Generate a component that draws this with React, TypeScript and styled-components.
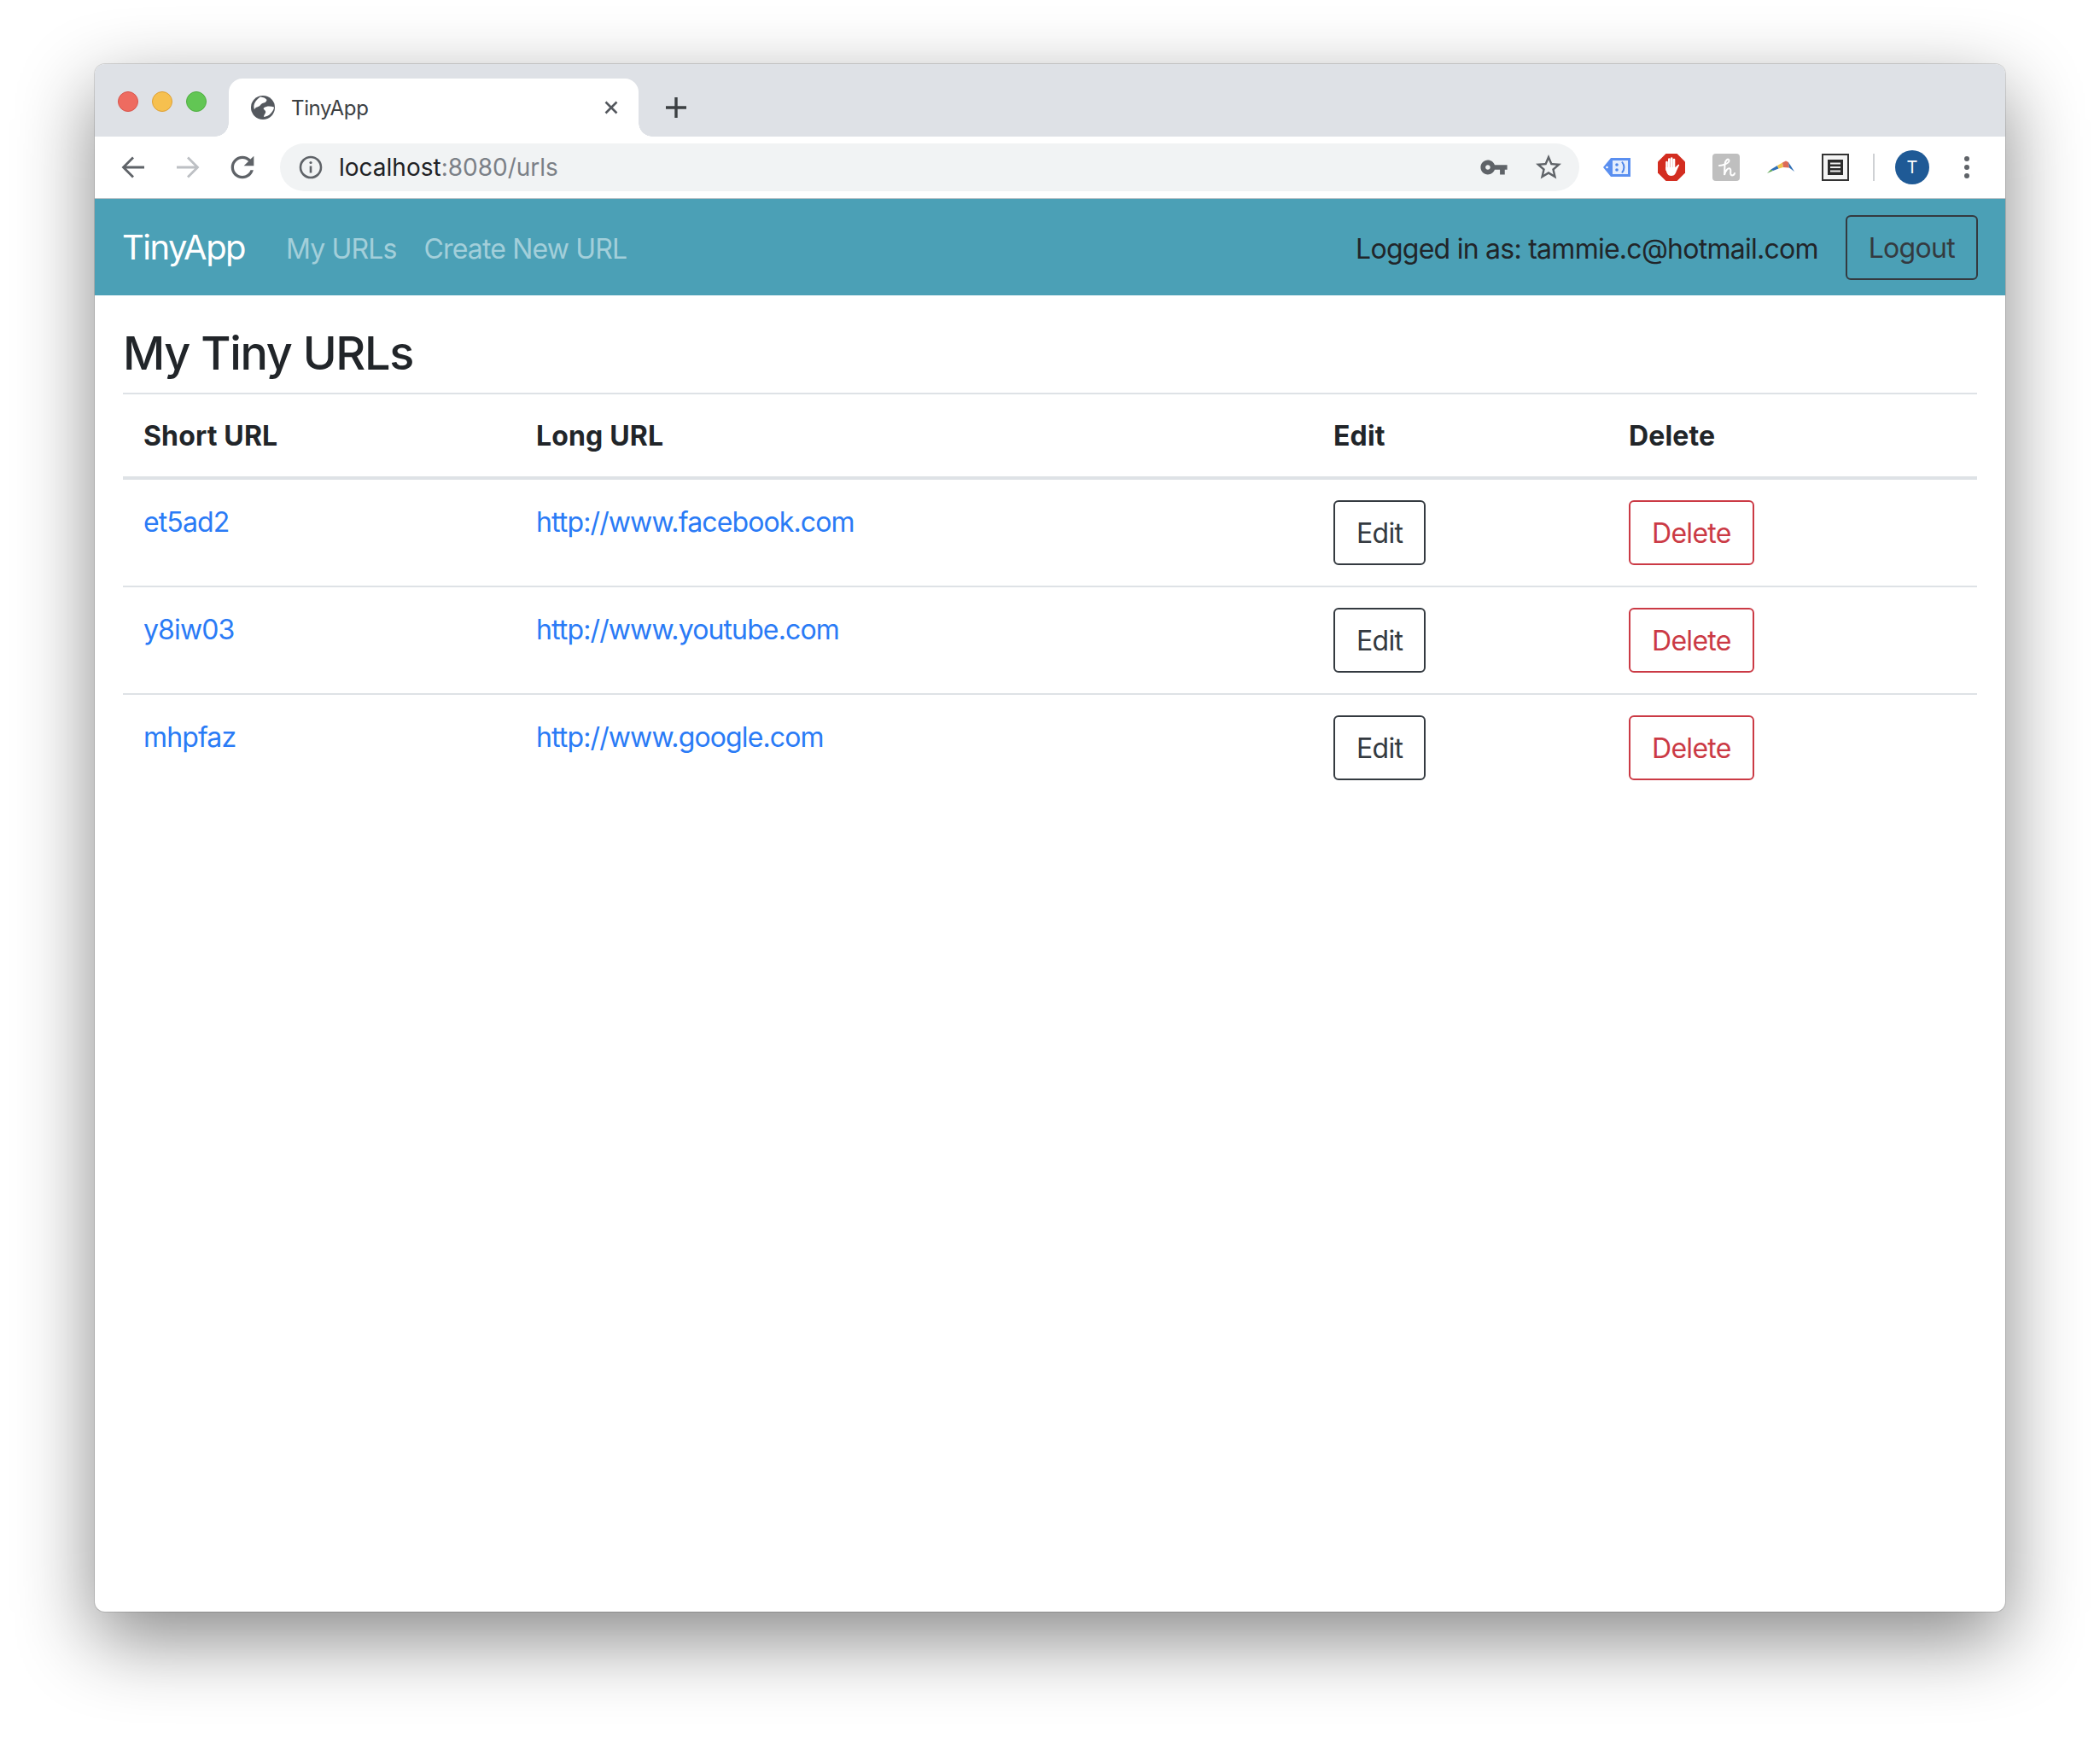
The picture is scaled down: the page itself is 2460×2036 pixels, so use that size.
import React from 'react'
import styled, { createGlobalStyle } from 'styled-components'

const GlobalStyle = createGlobalStyle`
  html, body { margin: 0; padding: 0; background: #fff; }
  body { font-family: Inter, "Liberation Sans", sans-serif; color: #212529; }
  * { box-sizing: border-box; }
`

const Stage = styled.div`
  width: 2460px;
  height: 2036px;
  padding: 75px 111px 148px;
  overflow: hidden;
`

const Window = styled.div`
  height: 1813px;
  border-radius: 12px;
  overflow: hidden;
  background: #fff;
  box-shadow: 0 0 0 1px rgba(0, 0, 0, 0.13), 0 32px 90px rgba(0, 0, 0, 0.47);
`

const TabStrip = styled.div`
  height: 85px;
  background: #dee1e6;
  display: flex;
  align-items: flex-start;
  padding-left: 27px;
`

const Lights = styled.div`
  display: flex;
  gap: 16px;
  margin-top: 32px;
`

const Light = styled.span<{ $fill: string; $edge: string }>`
  width: 24px;
  height: 24px;
  border-radius: 50%;
  background: ${p => p.$fill};
  border: 1px solid ${p => p.$edge};
`

const Tab = styled.div`
  position: relative;
  width: 480px;
  height: 68px;
  margin: 17px 0 0 26px;
  padding: 0 24px 0 26px;
  background: #fff;
  border-radius: 16px 16px 0 0;
  display: flex;
  align-items: center;
  gap: 19px;

  &::before, &::after {
    content: '';
    position: absolute;
    bottom: 0;
    width: 16px;
    height: 16px;
  }
  &::before {
    left: -16px;
    background: radial-gradient(circle at 0 0, #dee1e6 15.5px, #fff 16px);
  }
  &::after {
    right: -16px;
    background: radial-gradient(circle at 100% 0, #dee1e6 15.5px, #fff 16px);
  }
`

const TabTitle = styled.span`
  flex: 1;
  font-size: 24px;
  letter-spacing: -0.35px;
  color: #3c4043;
`

const NewTab = styled.div`
  width: 32px;
  height: 32px;
  margin: 35px 0 0 28px;
  display: flex;
  align-items: center;
  justify-content: center;
`

const Toolbar = styled.div`
  height: 73px;
  padding-left: 13px;
  background: #fff;
  display: flex;
  align-items: center;
  border-bottom: 1px solid #b9c3c9;
`

const IconSlot = styled.div`
  width: 64px;
  height: 56px;
  flex-shrink: 0;
  display: flex;
  align-items: center;
  justify-content: center;
`

const Omnibox = styled.div`
  width: 1522px;
  height: 56px;
  margin: 0 12px;
  padding: 0 4px 0 22px;
  border-radius: 28px;
  background: #f1f3f4;
  display: flex;
  align-items: center;
`

const Address = styled.div`
  flex: 1;
  margin-left: 19px;
  font-size: 28px;
  color: #7b8087;

  b { font-weight: 400; color: #202124; }
`

const Separator = styled.div`
  width: 2px;
  height: 32px;
  margin: 0 12px;
  background: #cfd1d4;
`

const Avatar = styled.div`
  width: 40px;
  height: 40px;
  border-radius: 50%;
  background: #1f5a96;
  color: #fff;
  font-size: 20px;
  display: flex;
  align-items: center;
  justify-content: center;
`

const Navbar = styled.nav`
  height: 113px;
  padding: 0 32px;
  background: #4ba0b6;
  display: flex;
  align-items: center;
`

const Brand = styled.a`
  font-size: 40px;
  letter-spacing: -1.55px;
  color: #fff;
  margin-right: 48px;
`

const NavLink = styled.a`
  padding-top: 3px;
  font-size: 32px;
  letter-spacing: -0.85px;
  color: #a3cfda;
  margin-right: 32px;
`

const LoggedIn = styled.span`
  margin-left: auto;
  padding-top: 3px;
  font-size: 32px;
  letter-spacing: -0.74px;
  color: #212529;
`

const OutlineButton = styled.button<{ $color: string }>`
  height: 76px;
  padding: 2px 25px 0;
  border: 2px solid ${p => p.$color};
  border-radius: 6px;
  background: transparent;
  color: ${p => p.$color};
  font-family: inherit;
  font-size: 32px;
  letter-spacing: -0.7px;
  line-height: 48px;
`

const LogoutButton = styled(OutlineButton)`
  margin-left: 32px;
`

const Main = styled.main`
  padding: 34px 32px 0 33px;
`

const Heading = styled.h3`
  margin: 0 0 12px;
  font-size: 54px;
  font-weight: 500;
  letter-spacing: -1.3px;
  line-height: 68px;
  color: #212529;
`

const Table = styled.table`
  width: 2172px;
  border-collapse: separate;
  border-spacing: 0;
  table-layout: fixed;
  font-size: 32px;
  line-height: 48px;
`

const HeadCell = styled.th<{ $width: number }>`
  width: ${p => p.$width}px;
  padding: 25px 24px 23px;
  text-align: left;
  font-weight: 700;
  letter-spacing: 0.15px;
  color: #212529;
  border-top: 2px solid #dee2e6;
  border-bottom: 4px solid #dee2e6;
`

const Cell = styled.td`
  padding: 24px;
  vertical-align: top;

  tr + tr & { border-top: 2px solid #dee2e6; }
`

const TableLink = styled.a`
  display: inline-block;
  padding-top: 2px;
  color: #2a7bf6;
  letter-spacing: -0.88px;
  text-decoration: none;
`

const GlobeIcon = () => (
  <svg width="28" height="28" viewBox="0 0 28 28">
    <circle cx="14" cy="14" r="14" fill="#54585e" />
    <path d="M11 1.500c3 .3 6.500 1.500 7.500 3.500-.5 3-3 3.500-5 4-2 1-2.500 2.500-4 3.500-2 1-4.500 1-5.500 4-1-3-1-6 1-9 1.500-2.500 3.500-4.500 6-6z" fill="#fff" />
    <path d="M27 13.500c-3-.8-6-1.500-9-.5-2 .7-4 1.500-3 3 1.500 1.200 2.800 2.500 2 4-.5 1.500-2 3-2 5 3-.3 6-1.500 8.500-4.500 2-2.500 3.500-4.500 3.500-7z" fill="#fff" />
  </svg>
)

const CloseIcon = () => (
  <svg width="16" height="16" viewBox="0 0 16 16" stroke="#54585e" strokeWidth="2.6">
    <path d="M1.5 1.5l13 13M14.5 1.5l-13 13" />
  </svg>
)

const PlusIcon = () => (
  <svg width="24" height="24" viewBox="0 0 24 24" stroke="#3c4043" strokeWidth="3.4">
    <path d="M12 0v24M0 12h24" />
  </svg>
)

const ArrowIcon = ({ color, flip }: { color: string; flip?: boolean }) => (
  <svg width="28" height="26" viewBox="0 0 28 26" fill="none" stroke={color} strokeWidth="2.8" style={flip ? { transform: 'scaleX(-1)' } : undefined}>
    <path d="M27 13H3M14 1.5L2.5 13 14 24.5" />
  </svg>
)

const ReloadIcon = () => (
  <svg width="40" height="40" viewBox="0 0 24 24" fill="#5f6368">
    <path d="M17.65 6.35C16.2 4.9 14.21 4 12 4c-4.42 0-7.99 3.58-7.99 8s3.57 8 7.99 8c3.73 0 6.84-2.55 7.73-6h-2.08c-.82 2.33-3.04 4-5.65 4-3.31 0-6-2.69-6-6s2.69-6 6-6c1.66 0 3.14.69 4.22 1.78L13 11h7V4l-2.35 2.35z" />
  </svg>
)

const InfoIcon = () => (
  <svg width="28" height="28" viewBox="0 0 28 28" fill="none" stroke="#5f6368" strokeWidth="2.6">
    <circle cx="14" cy="14" r="12" />
    <path d="M14 12.5v8" />
    <circle cx="14" cy="8.5" r="1.6" fill="#5f6368" stroke="none" />
  </svg>
)

const KeyIcon = () => (
  <svg width="34" height="34" viewBox="0 0 24 24" fill="#5f6368">
    <path d="M12.65 10C11.83 7.67 9.61 6 7 6c-3.31 0-6 2.69-6 6s2.69 6 6 6c2.61 0 4.83-1.67 5.65-4H17v4h4v-4h2v-4H12.65zM7 14c-1.1 0-2-.9-2-2s.9-2 2-2 2 .9 2 2-.9 2-2 2z" />
  </svg>
)

const StarIcon = () => (
  <svg width="36" height="36" viewBox="0 0 24 24" fill="#5f6368">
    <path d="M22 9.24l-7.19-.62L12 2 9.19 8.63 2 9.24l5.46 4.73L5.82 21 12 17.27 18.18 21l-1.63-7.03L22 9.24zM12 15.4l-3.76 2.27 1-4.28-3.32-2.88 4.38-.38L12 6.1l1.71 4.04 4.38.38-3.32 2.88 1 4.28L12 15.4z" />
  </svg>
)

const TagIcon = () => (
  <svg width="32" height="24" viewBox="0 0 32 24">
    <path d="M0 12L9 1h23v22H9z" fill="#5a8ff0" />
    <circle cx="4.5" cy="12" r="1.3" fill="#fff" />
    <rect x="11" y="4" width="18" height="16" fill="#e4edfd" />
    <circle cx="16" cy="9" r="1.8" fill="#4d86ea" />
    <circle cx="16" cy="15" r="1.8" fill="#4d86ea" />
    <path d="M22 5.500c3 4 3 9 0 13" fill="none" stroke="#4d86ea" strokeWidth="2" />
  </svg>
)

const StopIcon = () => (
  <svg width="32" height="32" viewBox="0 0 32 32">
    <path d="M9.500 0h13L32 9.500v13L22.500 32h-13L0 22.500v-13z" fill="#d32d20" />
    <path d="M10.500 10v9M13.300 6.500v10M16.200 5.500v11M19 7v11" stroke="#fff" strokeWidth="2.600" strokeLinecap="round" />
    <path d="M9.200 16h11.200l3.800-3.500 1 .8-3.200 6.700c-1 3-2.500 6-6 6-3 0-4.800-1.400-5.800-4.500z" fill="#fff" />
  </svg>
)

const HoneyIcon = () => (
  <svg width="32" height="32" viewBox="0 0 32 32">
    <rect width="32" height="32" rx="4" fill="#bfbfbf" />
    <path d="M8 14C12 14 20 11 19.500 8 19 5 15 7 14.500 13L14 25C15 20 18 16.500 20.500 17.500 23 19 19 25 23 25.500 24.500 25.500 25.500 24.500 26 23" fill="none" stroke="#fff" strokeWidth="2" strokeLinecap="round" />
  </svg>
)

const BoomerangIcon = () => (
  <svg width="32" height="16" viewBox="0 0 32 16">
    <polygon points="0,15 4.500,10.500 7,12" fill="#5aa552" />
    <polygon points="4.500,10.500 12,6 13.500,9.500 7,12" fill="#2f6fb5" />
    <polygon points="12,6 18,2.500 19,8 13.500,9.500" fill="#efc34e" />
    <polygon points="18,2.500 22,0.500 25,2 26,8.500 19,8" fill="#dd6a55" />
    <polygon points="25,2 32,13 26,8.500" fill="#2f6fb5" />
  </svg>
)

const ReaderIcon = () => (
  <svg width="32" height="32" viewBox="0 0 32 32">
    <rect x="1" y="1" width="30" height="30" fill="#f4f4f4" stroke="#333" strokeWidth="2" />
    <rect x="7" y="7" width="18" height="18" fill="#2b2b2b" />
    <path d="M10 11.500h12M10 16h12M10 20.500h12" stroke="#eee" strokeWidth="1.800" />
  </svg>
)

const DotsIcon = () => (
  <svg width="6" height="26" viewBox="0 0 6 26" fill="#5f6368">
    <circle cx="3" cy="3" r="3" />
    <circle cx="3" cy="13" r="3" />
    <circle cx="3" cy="23" r="3" />
  </svg>
)

const rows = [
  { id: 'et5ad2', url: 'http://www.facebook.com' },
  { id: 'y8iw03', url: 'http://www.youtube.com' },
  { id: 'mhpfaz', url: 'http://www.google.com' },
]

export default function App() {
  return (
    <Stage>
      <GlobalStyle />
      <Window>
        <TabStrip>
          <Lights>
            <Light $fill="#ee6b60" $edge="#d8554c" />
            <Light $fill="#f6c04f" $edge="#dea035" />
            <Light $fill="#62c654" $edge="#4fae41" />
          </Lights>
          <Tab>
            <GlobeIcon />
            <TabTitle>TinyApp</TabTitle>
            <CloseIcon />
          </Tab>
          <NewTab><PlusIcon /></NewTab>
        </TabStrip>

        <Toolbar>
          <IconSlot><ArrowIcon color="#5f6368" /></IconSlot>
          <IconSlot><ArrowIcon color="#bdc0c4" flip /></IconSlot>
          <IconSlot><ReloadIcon /></IconSlot>
          <Omnibox>
            <InfoIcon />
            <Address><b>localhost</b>:8080/urls</Address>
            <IconSlot><KeyIcon /></IconSlot>
            <IconSlot><StarIcon /></IconSlot>
          </Omnibox>
          <IconSlot><TagIcon /></IconSlot>
          <IconSlot><StopIcon /></IconSlot>
          <IconSlot><HoneyIcon /></IconSlot>
          <IconSlot><BoomerangIcon /></IconSlot>
          <IconSlot><ReaderIcon /></IconSlot>
          <Separator />
          <IconSlot><Avatar>T</Avatar></IconSlot>
          <IconSlot><DotsIcon /></IconSlot>
        </Toolbar>

        <Navbar>
          <Brand>TinyApp</Brand>
          <NavLink>My URLs</NavLink>
          <NavLink>Create New URL</NavLink>
          <LoggedIn>Logged in as: tammie.c@hotmail.com</LoggedIn>
          <LogoutButton $color="#343a40">Logout</LogoutButton>
        </Navbar>

        <Main>
          <Heading>My Tiny URLs</Heading>
          <Table>
            <thead>
              <tr>
                <HeadCell $width={460}>Short URL</HeadCell>
                <HeadCell $width={934}>Long URL</HeadCell>
                <HeadCell $width={346}>Edit</HeadCell>
                <HeadCell $width={432}>Delete</HeadCell>
              </tr>
            </thead>
            <tbody>
              {rows.map(row => (
                <tr key={row.id}>
                  <Cell><TableLink href="#">{row.id}</TableLink></Cell>
                  <Cell><TableLink href="#">{row.url}</TableLink></Cell>
                  <Cell><OutlineButton $color="#343a40">Edit</OutlineButton></Cell>
                  <Cell><OutlineButton $color="#cb3a45">Delete</OutlineButton></Cell>
                </tr>
              ))}
            </tbody>
          </Table>
        </Main>
      </Window>
    </Stage>
  )
}
